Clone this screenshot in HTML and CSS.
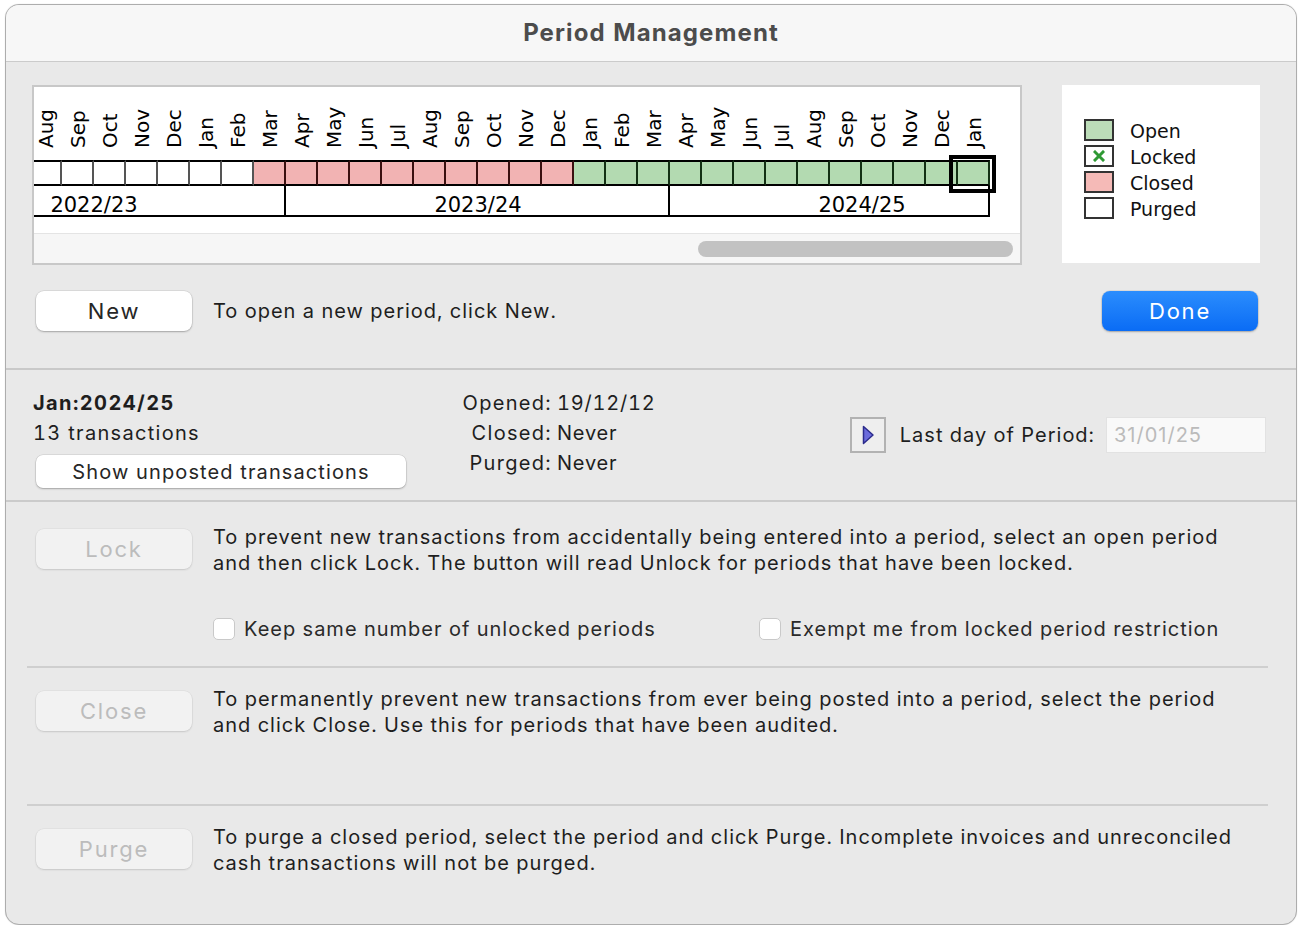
FILE: index.html
```html
<!DOCTYPE html>
<html lang="en">
<head>
    <meta charset="UTF-8">
    <title>Period Management</title>
    <link rel="stylesheet" href="styles.css">
</head>
<body>

    <div class="window">
        <div class="titlebar">Period Management</div>

        <div class="top">
            <div class="chart-row">
                <div class="chart">
                    <div class="viewport">
                        <div class="strip">
                            <div class="months">
                                <div class="month purged"><span class="m-name">Aug</span><span class="m-cell"></span></div>
                                <div class="month purged"><span class="m-name">Sep</span><span class="m-cell"></span></div>
                                <div class="month purged"><span class="m-name">Oct</span><span class="m-cell"></span></div>
                                <div class="month purged"><span class="m-name">Nov</span><span class="m-cell"></span></div>
                                <div class="month purged"><span class="m-name">Dec</span><span class="m-cell"></span></div>
                                <div class="month purged"><span class="m-name">Jan</span><span class="m-cell"></span></div>
                                <div class="month purged"><span class="m-name">Feb</span><span class="m-cell"></span></div>
                                <div class="month closed"><span class="m-name">Mar</span><span class="m-cell"></span></div>

                                <div class="month closed"><span class="m-name">Apr</span><span class="m-cell"></span></div>
                                <div class="month closed"><span class="m-name">May</span><span class="m-cell"></span></div>
                                <div class="month closed"><span class="m-name">Jun</span><span class="m-cell"></span></div>
                                <div class="month closed"><span class="m-name">Jul</span><span class="m-cell"></span></div>
                                <div class="month closed"><span class="m-name">Aug</span><span class="m-cell"></span></div>
                                <div class="month closed"><span class="m-name">Sep</span><span class="m-cell"></span></div>
                                <div class="month closed"><span class="m-name">Oct</span><span class="m-cell"></span></div>
                                <div class="month closed"><span class="m-name">Nov</span><span class="m-cell"></span></div>
                                <div class="month closed"><span class="m-name">Dec</span><span class="m-cell"></span></div>
                                <div class="month open"><span class="m-name">Jan</span><span class="m-cell"></span></div>
                                <div class="month open"><span class="m-name">Feb</span><span class="m-cell"></span></div>
                                <div class="month open"><span class="m-name">Mar</span><span class="m-cell"></span></div>

                                <div class="month open"><span class="m-name">Apr</span><span class="m-cell"></span></div>
                                <div class="month open"><span class="m-name">May</span><span class="m-cell"></span></div>
                                <div class="month open"><span class="m-name">Jun</span><span class="m-cell"></span></div>
                                <div class="month open"><span class="m-name">Jul</span><span class="m-cell"></span></div>
                                <div class="month open"><span class="m-name">Aug</span><span class="m-cell"></span></div>
                                <div class="month open"><span class="m-name">Sep</span><span class="m-cell"></span></div>
                                <div class="month open"><span class="m-name">Oct</span><span class="m-cell"></span></div>
                                <div class="month open"><span class="m-name">Nov</span><span class="m-cell"></span></div>
                                <div class="month open"><span class="m-name">Dec</span><span class="m-cell"></span></div>
                                <div class="month open selected"><span class="m-name">Jan</span><span class="m-cell"><span class="sel-box"></span></span></div>
                            </div>
                            <div class="years">
                                <div class="year first"><span>2022/23</span></div>
                                <div class="year full"><span>2023/24</span></div>
                                <div class="year part"><span>2024/25</span></div>
                            </div>
                        </div>
                    </div>
                    <div class="scrollbar"><div class="thumb"></div></div>
                </div>

                <div class="legend">
                    <div class="legend-item"><span class="swatch open"></span>Open</div>
                    <div class="legend-item">
                        <span class="swatch locked">
                            <svg width="12" height="12" viewBox="0 0 12 12"><path d="M2 2 L10 10 M10 2 L2 10" stroke="#2f9934" stroke-width="3" stroke-linecap="square"/></svg>
                        </span>Locked
                    </div>
                    <div class="legend-item"><span class="swatch closed"></span>Closed</div>
                    <div class="legend-item"><span class="swatch purged"></span>Purged</div>
                </div>
            </div>

            <div class="new-row">
                <button class="btn btn-wide">New</button>
                <p class="hint">To open a new period, click New.</p>
                <button class="btn btn-wide btn-primary">Done</button>
            </div>
        </div>

        <div class="info">
            <div class="period">
                <div class="period-name">Jan:2024/25</div>
                <div>13 transactions</div>
                <button class="btn btn-small">Show unposted transactions</button>
            </div>

            <div class="dates">
                <span class="date-label">Opened:</span><span>19/12/12</span>
                <span class="date-label">Closed:</span><span>Never</span>
                <span class="date-label">Purged:</span><span>Never</span>
            </div>

            <div class="lastday">
                <button class="arrow-btn">
                    <svg width="14" height="20" viewBox="0 0 14 20"><path d="M2.5 1.5 L12 10 L2.5 18.5 Z" fill="#6b6bdc" stroke="#2b2b8c" stroke-width="1.5" stroke-linejoin="round"/></svg>
                </button>
                <label for="lastday">Last day of Period:</label>
                <input type="text" id="lastday" value="31/01/25" disabled>
            </div>
        </div>

        <div class="actions">
            <div class="action action-lock">
                <button class="btn btn-wide" disabled>Lock</button>
                <div class="action-body">
                    <p>To prevent new transactions from accidentally being entered into a period, select an open period and then click Lock. The button will read Unlock for periods that have been locked.</p>
                    <div class="options">
                        <label class="check"><input type="checkbox"><span>Keep same number of unlocked periods</span></label>
                        <label class="check"><input type="checkbox"><span>Exempt me from locked period restriction</span></label>
                    </div>
                </div>
            </div>

            <div class="action action-close">
                <button class="btn btn-wide" disabled>Close</button>
                <div class="action-body">
                    <p>To permanently prevent new transactions from ever being posted into a period, select the period and click Close. Use this for periods that have been audited.</p>
                </div>
            </div>

            <div class="action action-purge">
                <button class="btn btn-wide" disabled>Purge</button>
                <div class="action-body">
                    <p>To purge a closed period, select the period and click Purge. Incomplete invoices and unreconciled cash transactions will not be purged.</p>
                </div>
            </div>
        </div>
    </div>

</body>
</html>
```

FILE: styles.css
```css
* {
    margin: 0;
    padding: 0;
    box-sizing: border-box;
}

body {
    background: #fff;
    font-family: Inter, "Liberation Sans", sans-serif;
    font-size: 20px;
    letter-spacing: 1px;
    font-variant-numeric: tabular-nums;
    color: #1e1e1e;
}

.window {
    width: 1292px;
    height: 921px;
    margin: 4px 0 0 5px;
    border: 1px solid #adadad;
    border-radius: 14px;
    background: #e9e9e9;
    overflow: hidden;
    box-shadow: 0 0 1px rgba(0, 0, 0, 0.2);
}

.titlebar {
    height: 57px;
    padding-bottom: 2px;
    background: #f7f7f7;
    border-bottom: 1px solid #cbcbcb;
    display: flex;
    align-items: center;
    justify-content: center;
    font-size: 24px;
    letter-spacing: 1.1px;
    font-weight: bold;
    color: #4c4c4c;
}

/* top: chart + legend + New/Done */

.top {
    height: 308px;
    padding: 23px 36px 0 26px;
    border-bottom: 2px solid #c9c9c9;
}

.chart-row {
    display: flex;
    gap: 40px;
}

.chart {
    width: 990px;
    height: 180px;
    border: 2px solid #c8c8c8;
    background: #fff;
}

.viewport {
    height: 146px;
    overflow: hidden;
}

.strip {
    margin-left: -4px;
    width: 960px;
    font-family: "DejaVu Sans", sans-serif;
    letter-spacing: 0;
    color: #000;
}

.months {
    display: flex;
}

.month {
    width: 32px;
    display: flex;
    flex-direction: column;
}

.m-name {
    height: 73px;
    width: 32px;
    line-height: 32px;
    padding-top: 12px;
    writing-mode: vertical-rl;
    transform: rotate(180deg);
    font-size: 20px;
}

.m-cell {
    position: relative;
    height: 26px;
    border-top: 2px solid #000;
    border-bottom: 2px solid #000;
    border-right: 2px solid #555;
    background: #fff;
}

.month.closed .m-cell {
    background: #f2b3b3;
    border-right-color: #3a1010;
}

.month.open .m-cell {
    background: #b3dab1;
    border-right-color: #133014;
}

.sel-box {
    position: absolute;
    left: -9px;
    top: -7px;
    width: 47px;
    height: 38px;
    border: 4px solid #000;
}

.years {
    display: flex;
}

.year {
    height: 31px;
    border-right: 2px solid #000;
    border-bottom: 2px solid #000;
    font-size: 21px;
}

.year.first {
    width: 256px;
}

.year.full {
    width: 384px;
}

.year.part {
    width: 320px;
}

.year span {
    display: block;
    width: 384px;
    text-align: center;
    padding-top: 6px;
    line-height: 27px;
}

.year.first span {
    margin-left: -128px;
}

.scrollbar {
    height: 30px;
    background: #f6f6f6;
    border-top: 1px solid #e4e4e4;
    padding: 7px 0 0 664px;
}

.thumb {
    width: 315px;
    height: 16px;
    border-radius: 8px;
    background: #c2c2c2;
}

.legend {
    width: 198px;
    height: 178px;
    background: #fff;
    padding: 32px 0 0 22px;
    font-family: "DejaVu Sans", sans-serif;
    font-size: 19px;
    letter-spacing: 0;
    color: #111;
}

.legend-item {
    display: flex;
    align-items: center;
    height: 26px;
    gap: 16px;
    padding-top: 2px;
}

.swatch {
    width: 30px;
    height: 22px;
    margin-top: -2px;
    border: 2px solid #333;
    display: flex;
    align-items: center;
    justify-content: center;
    background: #fff;
}

.swatch.open {
    background: #bcdcb8;
}

.swatch.closed {
    background: #f5bab7;
}

.new-row {
    display: flex;
    align-items: center;
    margin-top: 26px;
    padding-left: 4px;
}

.hint {
    margin-left: 21px;
}

/* buttons */

.btn {
    font-family: Inter, "Liberation Sans", sans-serif;
    background: #fff;
    color: #262626;
    border: none;
    border-radius: 8px;
    box-shadow: 0 0 0 0.5px rgba(0, 0, 0, 0.12), 0 1px 2px rgba(0, 0, 0, 0.25);
}

.btn-wide {
    width: 156px;
    height: 40px;
    font-size: 22px;
    letter-spacing: 1.8px;
}

.btn-primary {
    margin-left: auto;
    margin-right: 2px;
    color: #fff;
    background: linear-gradient(#2b8dfd, #0a6cf5);
}

.btn:disabled {
    background: #f2f2f2;
    color: #bcbcbc;
    box-shadow: 0 0 0 0.5px rgba(0, 0, 0, 0.06), 0 1px 2px rgba(0, 0, 0, 0.12);
}

.btn-small {
    width: 370px;
    height: 33px;
    margin: 7px 0 0 3px;
    font-size: 20px;
    letter-spacing: 1.1px;
    border-radius: 7px;
}

/* selected period info */

.info {
    display: flex;
    height: 132px;
    padding: 18px 30px 0 27px;
    border-bottom: 2px solid #cbcbcb;
    line-height: 30px;
    letter-spacing: 1.3px;
}

.period {
    width: 407px;
}

.period-name {
    font-weight: bold;
    letter-spacing: 1.4px;
}

.dates {
    display: grid;
    grid-template-columns: 112px auto;
    column-gap: 5px;
    align-content: start;
}

.dates span:nth-child(even) {
    letter-spacing: 0.8px;
}

.date-label {
    text-align: right;
}

.lastday {
    margin-left: auto;
    margin-top: 29px;
    height: 36px;
    display: flex;
    align-items: center;
    letter-spacing: 1px;
}

.arrow-btn {
    width: 36px;
    height: 36px;
    border: 2px solid #b2b2b2;
    background: #eeeeee;
    display: flex;
    align-items: center;
    justify-content: center;
}

.lastday label {
    margin-left: 14px;
}

.lastday input {
    margin-left: 11px;
    width: 160px;
    height: 36px;
    padding-left: 7px;
    border: 1px solid #e2e2e2;
    background: #f9f9f9;
    font-family: Inter, "Liberation Sans", sans-serif;
    font-size: 20px;
    letter-spacing: 1px;
    color: #bbb;
}

/* lock / close / purge */

.actions {
    padding: 0 28px 0 21px;
}

.action {
    display: flex;
    gap: 21px;
    padding-left: 9px;
    border-bottom: 2px solid #cfcfcf;
}

.action-lock {
    height: 166px;
    padding-top: 27px;
}

.action-close {
    height: 138px;
    padding-top: 23px;
}

.action-purge {
    padding-top: 23px;
    border-bottom: none;
}

.action .btn {
    flex-shrink: 0;
}

.action-body {
    width: 1035px;
    margin-top: -5px;
    line-height: 26px;
}

.options {
    display: grid;
    grid-template-columns: 546px auto;
    margin-top: 40px;
}

.check {
    display: flex;
    align-items: center;
    gap: 9px;
    color: #2a2a2a;
}

.check input {
    appearance: none;
    width: 22px;
    height: 22px;
    border: 1px solid #c9c9c9;
    border-radius: 5px;
    background: #fff;
}
```
